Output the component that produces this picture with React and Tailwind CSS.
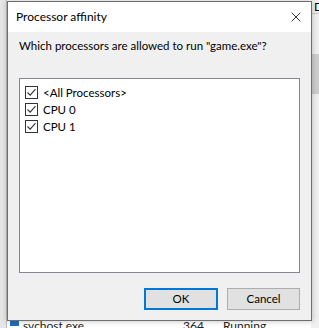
import { X } from "lucide-react";

const font = { fontFamily: 'Lato, "Noto Sans", sans-serif' };

function CheckRow({ label }) {
  return (
    <div className="flex items-center h-[17px]">
      <span className="w-[13px] h-[13px] border border-[#333] bg-white flex items-center justify-center">
        <svg width="11" height="11" viewBox="0 0 11 11">
          <path d="M1.5 5.5 L4.2 8.2 L9.5 2.2" fill="none" stroke="#333" strokeWidth="1.1" />
        </svg>
      </span>
      <span className="ml-[5px] text-[11.5px] text-black leading-none">{label}</span>
    </div>
  );
}

export default function App() {
  return (
    <div className="relative w-[319px] h-[328px] overflow-hidden bg-white" style={font}>
      {/* task manager behind */}
      <div className="flex h-full">
        <div className="w-[7px] h-full bg-[#e6e6e6] border-r border-[#bdbdbd]" />
        <div className="flex-1 flex flex-col justify-end">
          <div className="flex items-start h-[8px] text-[12px] text-[#222] leading-none">
            <span className="ml-[3px] mr-[4px] w-[9px] h-[6px] bg-[#1e6fc0]" />
            <span className="w-[160px]">svchost.exe</span>
            <span className="w-[40px]">364</span>
            <span>Running</span>
          </div>
        </div>
        <div className="w-[8px] h-full bg-[#f0f0f0] flex flex-col">
          <div className="h-[14px] border-b border-[#ccc] text-[12px] leading-none pt-[1px] pl-[3px]">D</div>
          <div className="h-[40px] mt-[40px] bg-[#cdcdcd]" />
        </div>
      </div>

      {/* dialog */}
      <div className="absolute left-[7px] top-[1px] w-[305px] h-[320px] border border-[#6e6e6e] bg-[#f0f0f0] flex flex-col shadow-[0_0_6px_rgba(0,0,0,0.25)]">
        <div className="h-[30px] bg-white flex items-center justify-between shrink-0">
          <span className="ml-[8px] text-[12px] text-black">Processor affinity</span>
          <X size={16} strokeWidth={1.2} className="mr-[7px] text-black" />
        </div>
        <div className="flex-1 flex flex-col px-[11px]">
          <div className="mt-[6px] h-[16px] text-[11.5px] text-black leading-[16px]">
            Which processors are allowed to run "game.exe"?
          </div>
          <div className="mt-[24px] h-[195px] border border-[#828790] bg-white pt-[5px] pl-[5px]">
            <CheckRow label="<All Processors>" />
            <CheckRow label="CPU 0" />
            <CheckRow label="CPU 1" />
          </div>
          <div className="flex justify-end gap-[9px] mt-[15px]">
            <button className="w-[74px] h-[22px] border-2 border-[#0078d7] bg-[#e1e1e1] text-[11.5px] text-black">
              OK
            </button>
            <button className="w-[73px] h-[22px] border border-[#adadad] bg-[#e1e1e1] text-[11.5px] text-black">
              Cancel
            </button>
          </div>
        </div>
      </div>
    </div>
  );
}
